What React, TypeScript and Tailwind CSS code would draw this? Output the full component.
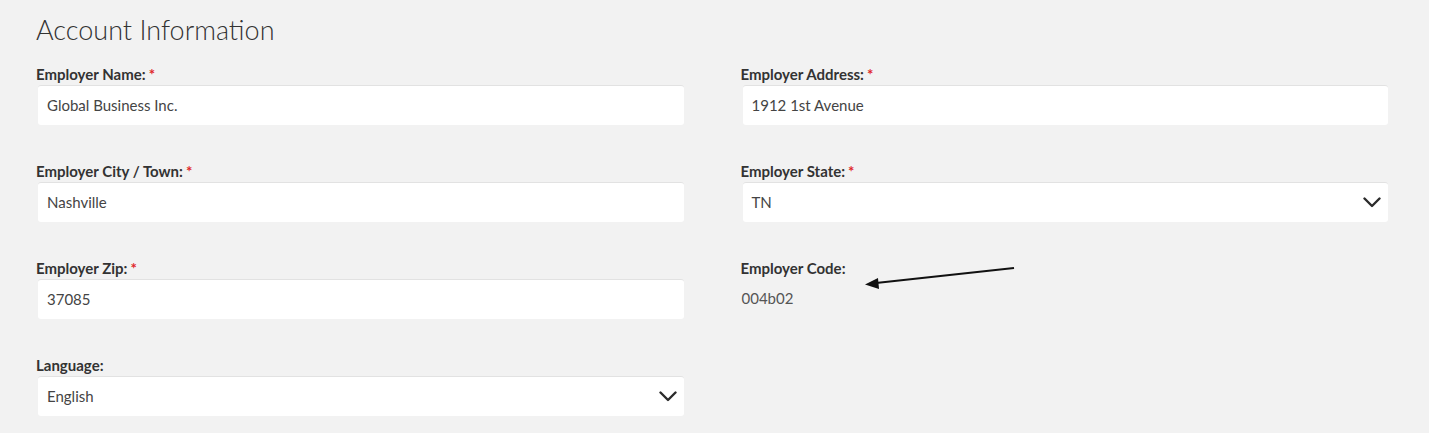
import React from "react";

function Chevron() {
  return (
    <svg width="18" height="11" viewBox="0 0 18 11" className="text-[#2b2b2b]">
      <path d="M1.5 1.5 L9 9 L16.5 1.5" fill="none" stroke="currentColor" strokeWidth="2.4" strokeLinecap="round" strokeLinejoin="round" />
    </svg>
  );
}

function Label({ text, required }: { text: string; required?: boolean }) {
  return (
    <div className="h-[20px] text-[15px] leading-[20px] font-bold text-[#333] -ml-px">
      {text}
      {required && <span className="text-[#e0262a] ml-[3px]">*</span>}
    </div>
  );
}

function Field({ label, value, required, select }: { label: string; value: string; required?: boolean; select?: boolean }) {
  return (
    <div className="flex flex-col">
      <Label text={label} required={required} />
      <div className="mt-[1px] ml-px h-[40px] bg-white rounded-[3px] border-t border-[#e2e2e2] flex items-center justify-between pl-[9px] pr-[7px] text-[15px] text-[#444]">
        <span>{value}</span>
        {select && <Chevron />}
      </div>
    </div>
  );
}

export default function App() {
  return (
    <div className="relative min-h-[433px] bg-[#f2f2f2] pl-[37px] pr-[41px] pt-[13px]" style={{ fontFamily: "Lato, 'Open Sans', sans-serif" }}>
      <h1 className="text-[27px] leading-[34px] font-light text-[#333] -ml-px">Account Information</h1>
      <div className="mt-[17px] grid grid-cols-2 gap-x-[58px] gap-y-[36px]">
        <Field label="Employer Name:" value="Global Business Inc." required />
        <Field label="Employer Address:" value="1912 1st Avenue" required />
        <Field label="Employer City / Town:" value="Nashville" required />
        <Field label="Employer State:" value="TN" required select />
        <Field label="Employer Zip:" value="37085" required />
        <div className="flex flex-col">
          <Label text="Employer Code:" />
          <div className="h-[41px] flex items-center text-[15px] text-[#555]">004b02</div>
        </div>
        <Field label="Language:" value="English" select />
      </div>
      <svg className="absolute left-[860px] top-[260px]" width="160" height="32" viewBox="860 260 160 32">
        <line x1="1014" y1="268" x2="876" y2="283" stroke="#111" strokeWidth="2" />
        <path d="M865 284.5 L878 278 L879 289 Z" fill="#111" />
      </svg>
    </div>
  );
}
